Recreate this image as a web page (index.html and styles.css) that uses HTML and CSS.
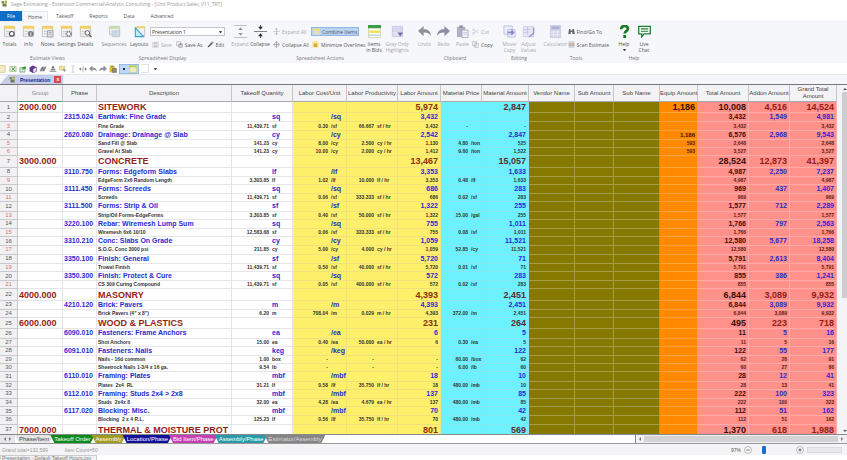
FILE: index.html
```html
<!DOCTYPE html>
<html lang="en">
<head>
<meta charset="utf-8">
<title>Sage Estimating</title>
<link rel="stylesheet" href="styles.css">
</head>
<body>
<svg class="defs" aria-hidden="true">
  <symbol id="sheet" viewBox="0 0 14 14"><path d="M1.5 1.5h11v11h-11z" fill="#f1f1f1" stroke="#c4c4c4"/><path d="M1 1h12v3H1z" fill="#f2cf63"/><path d="M3 7h5M3 9.500h4" stroke="#ccc"/></symbol>
  <symbol id="totals" viewBox="0 0 14 14"><use href="#sheet"/><circle cx="9.500" cy="9.500" r="2.500" fill="#fff" stroke="#555" stroke-width="1.300"/></symbol>
  <symbol id="info" viewBox="0 0 14 14"><use href="#sheet"/><circle cx="9.500" cy="9.500" r="3" fill="#777"/><path d="M9.500 8v3.500" stroke="#fff"/></symbol>
  <symbol id="notes" viewBox="0 0 14 14"><use href="#sheet"/><path d="M7 6h6v7H7z" fill="#ddd" stroke="#999" stroke-width=".8"/><path d="M8.500 8h3M8.500 10h3" stroke="#999" stroke-width=".7"/></symbol>
  <symbol id="settings" viewBox="0 0 14 14"><use href="#sheet"/><circle cx="9.500" cy="9.500" r="2.500" fill="#fff" stroke="#888" stroke-width="2" stroke-dasharray="1.500 .6"/></symbol>
  <symbol id="details" viewBox="0 0 14 14"><use href="#sheet"/><circle cx="9" cy="8.500" r="2.500" fill="#fff" stroke="#555"/><path d="M11 10.500l2.500 2.500" stroke="#555" stroke-width="1.300"/></symbol>
  <symbol id="seq" viewBox="0 0 14 14"><path d="M1.500 1.500h11v9h-11z" fill="#e8eee8" stroke="#bccbd0"/><path d="M1 1h12v3H1z" fill="#c8dcae"/><path d="M4.500 6.500h8v6h-8z" fill="#dfe7ef" stroke="#b8c4d0"/><path d="M5 8.500h7M5 10.500h7M8 7v5" stroke="#b8c4d0" stroke-width=".7"/></symbol>
  <symbol id="layouts" viewBox="0 0 14 14"><path d="M3.500 2.500h9v9h-9z" fill="#f1f1f1" stroke="#c4c4c4"/><path d="M3 1.500h10v2H3z" fill="#f2cf63"/><path d="M2.500 3v9.500h9z" fill="#c7e8f5" stroke="#3aa0cc" stroke-width="1.200"/></symbol>
  <symbol id="disk" viewBox="0 0 14 14"><path d="M1.500 2.500h11v10h-11z" fill="#e6e6e8" stroke="#bbb"/><path d="M4 3h6v3.500H4zM4 9h6v3H4z" fill="#c4c4c8"/></symbol>
  <symbol id="diskas" viewBox="0 0 14 14"><path d="M1.500 1.500h8v8h-8z" fill="#fff" stroke="#888"/><path d="M5.500 5.500h7v7h-7z" fill="#ddd" stroke="#777"/><path d="M7 6h4v2H7z" fill="#888"/></symbol>
  <symbol id="pencil" viewBox="0 0 14 14"><path d="M1 13l1-3 8-8 2 2-8 8z" fill="#555"/><path d="M10 1l3 3" stroke="#777" stroke-width="2"/></symbol>
  <symbol id="expand" viewBox="0 0 14 14"><path d="M0 .5h14M0 13.500h14" stroke="#bbb"/><path d="M7 2.500l2.500 3h-5zM7 11.500l2.500-3h-5z" fill="#999"/></symbol>
  <symbol id="collapse" viewBox="0 0 14 14"><path d="M0 7h14" stroke="#777"/><path d="M7 5L4.500 2h5zM7 9l-2.500 3h5z" fill="#222"/><path d="M7 0v3M7 11v3" stroke="#444"/></symbol>
  <symbol id="expall" viewBox="0 0 14 14"><path d="M0 7h14M7 1v12" stroke="#aaa"/><path d="M7 0l3 3.500H4zM7 14l3-3.500H4z" fill="#b0b0b0"/></symbol>
  <symbol id="colall" viewBox="0 0 14 14"><circle cx="7" cy="7" r="4.500" fill="none" stroke="#888"/><path d="M0 7h14M7 0v14" stroke="#777"/></symbol>
  <symbol id="combine" viewBox="0 0 14 14"><path d="M1 1h12v12H1z" fill="#f5ecb0"/><path d="M1 1h12v3.500H1z" fill="#e8d765"/><path d="M1 7.500h12M1 10.500h12" stroke="#a9c4e8"/></symbol>
  <symbol id="minover" viewBox="0 0 14 14"><path d="M1 1h12v12H1z" fill="#f4d87a"/><path d="M4 5h6v7H4z" fill="#d8a93c"/><path d="M1 3h12" stroke="#fff3c4"/></symbol>
  <symbol id="bids" viewBox="0 0 14 14"><path d="M.5.500h13v13H.5z" fill="#fbfbef" stroke="#cfd8b8"/><path d="M0 0h14v3.500H0z" fill="#3d9c46"/><path d="M1 6h12v2.500H1z" fill="#f2df58"/><path d="M1 11h12" stroke="#9cbfd8"/></symbol>
  <symbol id="gray" viewBox="0 0 14 14"><path d="M1.500 1.500h11v11h-11z" fill="#dfe1f2" stroke="#c6c9e2"/><path d="M2 4h10M2 6.500h10" stroke="#c9cbe4"/><path d="M7 8h6l-3 4.500z" fill="#6c6fa8"/></symbol>
  <symbol id="undo" viewBox="0 0 14 14"><path d="M0 6.500L6 1v3.500c5 0 7.500 2 8 7-2-2.500-4.500-3.500-8-3.300V12z" fill="#8f9298"/></symbol>
  <symbol id="redo" viewBox="0 0 14 14"><path d="M14 6.500L8 1v3.500c-5 0-7.500 2-8 7 2-2.500 4.500-3.500 8-3.300V12z" fill="#8b8fa6"/></symbol>
  <symbol id="paste" viewBox="0 0 14 14"><path d="M1 2h9v11H1z" fill="#aeb1c2"/><path d="M3.500.500h4v2.500h-4z" fill="#8d90a4"/><path d="M6.500 5.500h6.500v8H6.500z" fill="#f5f5fb" stroke="#a9acc6"/><path d="M8 8h4M8 10h4" stroke="#b5b8cf" stroke-width=".8"/></symbol>
  <symbol id="cut" viewBox="0 0 14 14"><path d="M4 4l9 6M4 10l9-6" stroke="#bbb"/><circle cx="3" cy="3.500" r="1.800" fill="none" stroke="#bbb"/><circle cx="3" cy="10.500" r="1.800" fill="none" stroke="#bbb"/></symbol>
  <symbol id="copy" viewBox="0 0 14 14"><path d="M1.500 1.500h7v8h-7zM5.500 4.500h7v8h-7z" fill="#fff" stroke="#888"/></symbol>
  <symbol id="move" viewBox="0 0 14 14"><path d="M1 1h9v9H1zM5 5h8v8H5z" fill="#eceefa" stroke="#bcc0e0"/><path d="M5 7h4V4.500L12.500 8 9 11.500V9H5z" fill="#8288c0"/></symbol>
  <symbol id="adjust" viewBox="0 0 14 14"><path d="M1.500 1.500h11v11h-11z" fill="#e6e7f5" stroke="#cdcfe8"/><path d="M2 5h7M2 8h5M6 2v8" stroke="#c3c5e0"/><path d="M12.500 3v6l-5 4" stroke="#9a9ec8" stroke-width="1.600" fill="none"/></symbol>
  <symbol id="calc" viewBox="0 0 14 14"><path d="M1 0h12v14H1z" fill="#cfd1e6"/><path d="M2.500 1.500h9v3h-9z" fill="#aeb1d2"/><path d="M2 7.500h10M2 10.500h10M5 6v7M9 6v7" stroke="#f0f0f8"/></symbol>
  <symbol id="find" viewBox="0 0 14 14"><path d="M2 2h3v3h4V2h3l1.500 10H8.500V8h-3v4H.5z" fill="#666"/></symbol>
  <symbol id="scan" viewBox="0 0 14 14"><path d="M1 2h12M1 6h12M1 9h12M1 12h12" stroke="#999" stroke-width="1.400"/><path d="M1 6h12" stroke="#b5855f" stroke-width="1.400"/></symbol>
  <symbol id="help" viewBox="0 0 14 14"><path d="M3.500 4.500C3.500 0 10.700 0 10.700 4c0 2.600-3.500 2.500-3.500 5.200" fill="none" stroke="#157a1d" stroke-width="2.800"/><path d="M5.700 10.800h3V14h-3z" fill="#157a1d"/></symbol>
  <symbol id="chat" viewBox="0 0 14 14"><path d="M.8 1.500h12.400v8H6.500L4 12.800V9.500H.8z" fill="#fff" stroke="#1e7d35" stroke-width="1.400"/><path d="M3 4.200h8M3 6.700h8" stroke="#1e7d35" stroke-width="1.200"/></symbol>
  <symbol id="logo" viewBox="0 0 14 14"><path d="M1 2h5v5H1z" fill="#789c48"/><path d="M7 1h5v5H7z" fill="#b8b04a"/><path d="M3 7h8v6H3z" fill="#6f7c50"/></symbol>
  <symbol id="q1" viewBox="0 0 14 14"><path d="M1 1h10v12H1z" fill="#f3ecc8" stroke="#c5b76c"/></symbol>
  <symbol id="q2" viewBox="0 0 14 14"><path d="M1.500 2.500h11v9h-11z" fill="#e6f0da" stroke="#86a96a"/><path d="M5 4l5 6M10 4l-5 6" stroke="#2f8f3a" stroke-width="1.600"/></symbol>
  <symbol id="q3" viewBox="0 0 14 14"><path d="M1.500 4.500h9v8h-9z" fill="#cfe5cf" stroke="#589a60"/><path d="M5 8c1-4 3-6 7-6v5z" fill="#3e9a4a"/></symbol>
  <symbol id="q4" viewBox="0 0 14 14"><path d="M7 1l6 3v7l-6 3-6-3V4z" fill="#63388c"/><path d="M7 7l6-3v7l-6 3z" fill="#f4effa" stroke="#63388c"/></symbol>
  <symbol id="q5" viewBox="0 0 14 14"><path d="M1 11l4-8h8l-4 8z" fill="#777"/><path d="M4 9h3M7 5h3" stroke="#fff"/></symbol>
  <symbol id="q6" viewBox="0 0 14 14"><path d="M1 10h12v2H1zM3 7h8v2H3z" fill="#888"/><path d="M7 1l3 5H4z" fill="#666"/></symbol>
  <symbol id="q7" viewBox="0 0 14 14"><path d="M1 2h9v7H1z" fill="#efe6a8" stroke="#c3b860"/><path d="M6 6l7 3-3 1v3z" fill="#888"/></symbol>
  <symbol id="q8" viewBox="0 0 14 14"><path d="M4 1.500h6M4 12.500h6M7 2v10" stroke="#aaa" fill="none"/></symbol>
  <symbol id="q9" viewBox="0 0 14 14"><path d="M1 7h12M7 1v12" stroke="#999"/><path d="M0 7l3.500-3v6zM14 7l-3.500-3v6z" fill="#888"/></symbol>
  <symbol id="q10" viewBox="0 0 14 14"><path d="M1 2h9v11H1z" fill="#e0b93e"/><path d="M3 1h5v2H3z" fill="#8a7a4a"/><path d="M6 6h7v7H6z" fill="#8f8a6a" stroke="#6e6a50"/></symbol>
  <symbol id="q11" viewBox="0 0 14 14"><path d="M1 1h12v12H1z" fill="#e3e9a4" stroke="#b8c46a"/><path d="M1 1h12v3H1z" fill="#c3cc58"/><path d="M1 7.500h12M1 10.500h12M5 4v9M9 4v9" stroke="#f6f8dc"/></symbol>
  <symbol id="min" viewBox="0 0 14 14"><circle cx="7" cy="7" r="6" fill="#fff" stroke="#888"/><path d="M4 7h6" stroke="#555" stroke-width="1.500"/></symbol>
  <symbol id="plus" viewBox="0 0 14 14"><circle cx="7" cy="7" r="6" fill="#fff" stroke="#888"/><path d="M4 7h6M7 4v6" stroke="#555" stroke-width="1.500"/></symbol>
</svg>

<header class="titlebar"><svg><use href="#logo"/></svg><span>Sage Estimating - Extension.Commercial\Analytic.Consulting - [Unit Product Sales_V11_TRT]</span></header>

<nav class="menu">
  <button class="file">File</button><button class="on">Home</button><button>Takeoff</button><button>Reports</button><button>Data</button><button>Advanced</button>
</nav>

<section class="ribbon">
  <div class="group views">
    <div class="tools">
      <button class="big"><svg><use href="#totals"/></svg>Totals</button>
      <button class="big"><svg><use href="#info"/></svg>Info</button>
      <button class="big"><svg><use href="#notes"/></svg>Notes</button>
      <button class="big"><svg><use href="#settings"/></svg>Settings</button>
      <button class="big"><svg><use href="#details"/></svg>Details</button>
    </div>
    <div class="caption">Estimate Views</div>
  </div>
  <div class="group display">
    <div class="tools">
      <button class="big seq"><svg><use href="#seq"/></svg>Sequences</button>
      <button class="big lay"><svg><use href="#layouts"/></svg>Layouts</button>
      <div class="stack wide">
        <label class="combo"><select aria-label="Layout"><option>Presentation 1</option></select><i></i></label>
        <div class="line">
          <button class="small off"><svg><use href="#disk"/></svg>Save</button>
          <button class="small"><svg><use href="#diskas"/></svg>Save As</button>
          <button class="small"><svg><use href="#pencil"/></svg>Edit</button>
        </div>
      </div>
    </div>
    <div class="caption">Spreadsheet Display</div>
  </div>
  <div class="group actions">
    <div class="tools">
      <button class="big off"><svg><use href="#expand"/></svg>Expand</button>
      <button class="big"><svg><use href="#collapse"/></svg>Collapse</button>
      <div class="stack all">
        <button class="small off"><svg><use href="#expall"/></svg>Expand All</button>
        <button class="small"><svg><use href="#colall"/></svg>Collapse All</button>
      </div>
      <div class="stack lines">
        <button class="small pressed"><svg><use href="#combine"/></svg>Combine Items</button>
        <button class="small"><svg><use href="#minover"/></svg>Minimize Overlines</button>
      </div>
      <button class="big"><svg><use href="#bids"/></svg>Items<br>in Bids</button>
      <button class="big off hl"><svg><use href="#gray"/></svg>Gray Only<br>Highlights</button>
    </div>
    <div class="caption">Spreadsheet Actions</div>
  </div>
  <div class="group clip">
    <div class="tools">
      <button class="big off"><svg><use href="#undo"/></svg>Undo</button>
      <button class="big off"><svg><use href="#redo"/></svg>Redo</button>
      <button class="big off"><svg><use href="#paste"/></svg>Paste</button>
      <div class="stack">
        <button class="small off"><svg><use href="#cut"/></svg>Cut</button>
        <button class="small"><svg><use href="#copy"/></svg>Copy</button>
      </div>
    </div>
    <div class="caption">Clipboard</div>
  </div>
  <div class="group edit">
    <div class="tools">
      <button class="big off"><svg><use href="#move"/></svg>Move/<br>Copy</button>
      <button class="big off"><svg><use href="#adjust"/></svg>Adjust<br>Values</button>
    </div>
    <div class="caption">Editing</div>
  </div>
  <div class="group find">
    <div class="tools">
      <button class="big off calc"><svg><use href="#calc"/></svg>Calculator</button>
      <div class="stack">
        <button class="small"><svg><use href="#find"/></svg>Find/Go To</button>
        <button class="small"><svg><use href="#scan"/></svg>Scan Estimate</button>
      </div>
    </div>
    <div class="caption">Tools</div>
  </div>
  <div class="group help">
    <div class="tools">
      <button class="big"><svg><use href="#help"/></svg>Help<i class="caret"></i></button>
      <button class="big"><svg><use href="#chat"/></svg>Live<br>Chat</button>
    </div>
    <div class="caption">Help</div>
  </div>
</section>

<div class="quick">
  <button aria-label="New"><svg><use href="#q1"/></svg></button>
  <button aria-label="Export"><svg><use href="#q2"/></svg></button>
  <button aria-label="Import"><svg><use href="#q3"/></svg></button>
  <button aria-label="Model"><svg><use href="#q4"/></svg></button>
  <button aria-label="Assembly"><svg><use href="#q5"/></svg></button>
  <button aria-label="Item"><svg><use href="#q6"/></svg></button>
  <button aria-label="Pick"><svg><use href="#q7"/></svg></button>
  <button aria-label="Text"><svg><use href="#q8"/></svg></button>
  <button aria-label="Move"><svg><use href="#q9"/></svg></button>
  <button aria-label="Undo"><svg><use href="#undo"/></svg></button>
  <button aria-label="Redo"><svg><use href="#redo"/></svg></button>
  <button aria-label="Paste"><svg><use href="#q10"/></svg></button>
  <span class="picked"><b></b><svg><use href="#q11"/></svg></span>
  <span class="blank"></span><i class="caret"></i>
</div>

<div class="docs"><div class="doc"><svg><use href="#logo"/></svg><span>Presentation</span><button aria-label="Close">x</button></div></div>

<main class="sheet">
  <div class="pane">
    <table>
      <colgroup>
        <col class="w18"><col class="w45"><col class="w34"><col class="w135"><col class="w61"><col class="w54"><col class="w51"><col class="w43"><col class="w41"><col class="w47"><col class="w46"><col class="w39"><col class="w46"><col class="w38"><col class="w51"><col class="w41"><col class="w47">
      </colgroup>
      <thead><tr><th></th><th class="dim">Group</th><th>Phase</th><th>Description</th><th>Takeoff Quantity</th><th>Labor Cost/Unit</th><th>Labor Productivity</th><th>Labor Amount</th><th>Material Price</th><th>Material Amount</th><th>Vendor Name</th><th>Sub Amount</th><th>Sub Name</th><th>Equip Amount</th><th>Total Amount</th><th>Addon Amount</th><th>Grand Total<br>Amount</th></tr></thead>
      <tbody id="rows"></tbody>
    </table>
  </div>
  <div class="vscroll"><i class="up"></i><div class="thumb"></div><i class="down"></i></div>
</main>

<div class="tabs">
  <span class="arrows"><i class="left"></i><i class="right"></i></span>
  <button class="t-white">Phase/Item</button><button class="t-green">Takeoff Order</button><button class="t-olive">Assembly</button><button class="t-navy">Location/Phase</button><button class="t-pink">Bid Item/Phase</button><button class="t-teal">Assembly/Phase</button><button class="t-gray">Estimator/Assembly</button>
  <div class="hscroll"><i class="left"></i><div class="bar"></div><i class="right"></i></div>
</div>

<footer class="status">
  <span>Grand total=132,599</span><span>Item Count=50</span>
  <span class="zoom"><span>97%</span><svg><use href="#min"/></svg><input type="range" aria-label="Zoom" min="0" max="100" value="20"><svg><use href="#plus"/></svg><b></b></span>
</footer>
<div class="taskbar"><div>Presentation - Default Takeoff Hours.csv</div></div>
<script src="rows.js"></script>
</body>
</html>
```

FILE: styles.css
```css
* { box-sizing: border-box; }
body {
  margin: 0;
  height: 100vh;
  display: flex;
  flex-direction: column;
  overflow: hidden;
  background: #fff;
  color: #555;
  font: 5px/6px "Open Sans", "Liberation Sans", sans-serif;
  white-space: nowrap;
}
button { border: 0; padding: 0; margin: 0; background: none; color: inherit; font: inherit; }
svg { display: block; flex: none; }
.defs { position: absolute; width: 0; height: 0; }

.titlebar { height: 11px; flex: none; display: flex; gap: 3px; color: #999; padding-left: 1px; line-height: 8px; }
.titlebar svg { width: 7px; height: 7px; }

.menu { height: 10px; flex: none; display: flex; }
.menu button { height: 10px; padding: 0 8px; }
.menu .file { width: 22px; padding: 0; background: #0f6fc6; color: #fff; }
.menu .on { background: #f7f8fa; width: 26px; padding: 0; border: 1px solid #e6e8ec; border-bottom: 0; }

.ribbon { height: 42px; flex: none; display: flex; gap: 5px; background: #f6f7fa; border-top: 1px solid #eceef1; }
.group { display: flex; flex-direction: column; justify-content: space-between; padding: 3px 0 2px; }
.caption { text-align: center; color: #777; }
.tools { display: flex; }
.big { display: flex; flex-direction: column; align-items: center; justify-content: flex-start; width: 20px; text-align: center; }
.big svg { width: 13px; height: 13px; margin-bottom: 3px; }
.off { color: #a8a8ae; }
.views .big { width: 19px; }
.display .seq { width: 28px; color: #888; }
.display .lay { width: 22px; }
.display { width: 125px; }
.actions { width: 180px; }
.clip { width: 80px; }
.clip .big { width: 19px; }
.edit .big { width: 19px; }
.find { width: 66px; }
.find .calc { width: 26px; }
.actions .hl { width: 26px; }
.stack { display: flex; flex-direction: column; gap: 4px; padding-top: 2px; align-items: flex-start; }
.small { height: 9px; display: flex; align-items: center; gap: 2px; }
.small svg { width: 7px; height: 7px; }
.wide { flex: 1; }
.all { width: 41px; padding-left: 3px; }
.lines { flex: 1; min-width: 0; }
.lines .small { padding: 0 1px; }
.lines .pressed { background: #b9d4f6; border: 1px solid #8fb6e6; }
.line { display: flex; gap: 4px; padding-left: 2px; }
.combo { width: 100%; height: 9px; display: flex; align-items: center; border: 1px solid #c4c6ca; background: #fff; padding-right: 2px; }
.combo select { appearance: none; flex: 1; border: 0; background: none; padding: 0 1px; font: inherit; color: #333; height: 7px; }
.combo i, .caret { border: 1px solid transparent; border-top: 2px solid #444; border-bottom: 0; width: 3px; }
.big .caret { margin-top: 2px; }

.quick { height: 11px; flex: none; display: flex; align-items: center; gap: 2px; margin-left: -1px; }
.quick svg { width: 8px; height: 8px; }
.quick .picked { display: flex; align-items: center; gap: 4px; padding: 0 1px 0 3px; height: 10px; background: #bdd7f6; border: 1px solid #95bbe8; }
.picked b { width: 2px; height: 2px; background: #223; }
.blank { width: 8px; height: 9px; background: #fff; border: 1px solid #e2e2e6; border-left: 0; margin-right: 3px; }

.docs { height: 11px; flex: none; background: #f5f6f9; border-top: 1px solid #e6e7eb; border-bottom: 1px solid #777; display: flex; }
.doc { display: flex; align-items: center; background: #c6cdea; padding: 0 2px 0 9px; gap: 4px; clip-path: polygon(8px 0, 100% 0, 100% 100%, 0 100%); color: #1e1e8c; font: bold 5px/6px "Liberation Sans", sans-serif; }
.doc svg { width: 7px; height: 7px; }
.doc button { width: 7px; height: 7px; line-height: 5px; background: #d94a4a; color: #fff; }

.sheet { flex: 1; min-height: 0; display: flex; background: #fff; font-family: "Liberation Sans", Arial, sans-serif; }
.pane { flex: 1; min-width: 0; overflow: hidden; }
table { width: 100%; height: calc(100% + 2px); table-layout: fixed; border-collapse: separate; border-spacing: 0; }
.w18 { width: 18px; } .w34 { width: 34px; } .w38 { width: 38px; } .w39 { width: 39px; }
.w41 { width: 41px; } .w43 { width: 43px; } .w45 { width: 45px; } .w46 { width: 46px; }
.w47 { width: 47px; } .w51 { width: 51px; } .w54 { width: 54px; } .w61 { width: 61px; } .w135 { width: 135px; }
th { height: 17px; padding: 0; background: #f3f3f5; border-right: 1px solid #c6c6ca; border-bottom: 1px solid #aaa; font-weight: normal; font-size: 6px; line-height: 7px; color: #444; }
th.dim { color: #888; border-bottom-color: #4f9a78; }
td { padding: 0 2px 0 1px; border-right: 1px solid #e4e6ec; border-bottom: 1px solid #e4e6ec; font-weight: bold; text-align: right; overflow: visible; }
tr.group-row td { height: 11px; font-size: 9px; line-height: 10px; color: #941d17; }
tr.phase td { height: 9px; font-size: 7px; line-height: 8px; color: #2a2ad2; }
tr.detail td { height: 8px; font-size: 5px; line-height: 7px; color: #333; }
tbody tr td.num { background: #f1f1f3; color: #666; font-size: 6px; line-height: 7px; font-weight: normal; text-align: center; padding: 0; border-color: #c9c9cd; }
tbody tr.detail td.num { font-size: 6px; }
tbody tr.group-row td.num, tbody tr.phase td.num { color: #555; font-size: 6px; }
tbody tr.detail td.num.red { color: #e07070; }
tbody td.text { text-align: left; white-space: pre; }
.pair { display: grid; grid-template-columns: 1fr 18px; column-gap: 3px; }
.pair span { text-align: left; }
.cost .pair { grid-template-columns: 1fr 13px; }
.price .pair { grid-template-columns: 1fr 8px; }
td.labor { background: #fff06c; border-color: #f0e27a; }
td.mat { background: #6cf2ff; border-color: #88e4f2; }
td.sub { background: #857900; border-color: #a59c45; }
td.equip { background: #ff8a00; border-color: #ffa33a; }
td.sum { background: #ff908a; border-color: #ffaca8; }
tr.group-row td.labor { color: #8a3208; }
tr.group-row td.mat { color: #5c2c30; }
tr.group-row td.equip, tr.group-row td.total { color: #3a0f08; }
tr.phase td.equip, tr.phase td.total { color: #3a0f10; }
tr.detail td.sum, tr.detail td.equip { color: #5a1c18; }
tr.phase td.equip { font-size: 6px; }
.vscroll { width: 10px; flex: none; display: flex; flex-direction: column; align-items: flex-end; padding: 3px 0 2px; background: #f4f4f7; }
.thumb { width: 5px; height: 60%; background: #cdcdd0; margin-top: 2px; }
.up, .down, .left, .right { width: 0; height: 0; border: 2px solid transparent; flex: none; }
.up { border-top: 0; border-bottom-color: #555; }
.down { border-bottom: 0; border-top-color: #555; margin-top: auto; }
.left { border-left: 0; border-right-color: #777; }
.right { border-right: 0; border-left-color: #777; }

.tabs { height: 9px; flex: none; display: flex; background: #fff; border-top: 1px solid #888; font: 6px/8px "Liberation Sans", Arial, sans-serif; }
.tabs .arrows { width: 15px; display: flex; align-items: center; justify-content: space-evenly; background: #e6e6e8; }
.tabs button { color: #fff; padding: 0 4px; margin-right: -3px; clip-path: polygon(0 0, 100% 0, calc(100% - 4px) 100%, 4px 100%); }
.tabs .t-white { background: #e4e4e4; color: #444; }
.tabs .t-green { background: #0d8a1e; }
.tabs .t-olive { background: #a39a20; }
.tabs .t-navy { background: #10109a; }
.tabs .t-pink { background: #c63fb4; }
.tabs .t-teal { background: #2a9aa8; }
.tabs .t-gray { background: #858585; color: #ddd; }
.hscroll { width: 25%; margin-left: auto; display: flex; align-items: center; gap: 3px; padding: 0 4px 0 3px; background: #f1f1f3; border-left: 1px solid #888; }
.bar { flex: 1; height: 6px; background: #d3d3d6; }

.status { height: 12px; flex: none; display: flex; align-items: center; gap: 17px; padding: 0 5px 0 2px; background: #f4f4f6; border-top: 1px solid #999; color: #999; font-family: "Liberation Sans", Arial, sans-serif; }
.zoom { margin-left: auto; display: flex; align-items: center; gap: 3px; color: #555; }
.zoom svg { width: 8px; height: 8px; }
.zoom input { appearance: none; width: 38px; height: 8px; margin: 0; background: none; }
.zoom input::-webkit-slider-thumb { appearance: none; width: 4px; height: 8px; border-radius: 1px; background: #1a6fd0; }
.zoom b { width: 35px; height: 6px; background: #e9e9ec; border: 1px solid #dcdce0; }
.taskbar { height: 5px; flex: none; overflow: hidden; color: #777; font-family: "Liberation Sans", Arial, sans-serif; }
.taskbar div { width: 97px; background: #f2f2f4; border: 1px solid #ccc; padding-left: 1px; line-height: 5px; }
```

FILE: rows.js
```js
// Fields: kind | code | description | quantity | unit | labor cost | unit | productivity | unit
//         | labor amount | material price | unit | material amount | equipment | total | addon | grand total
const data = `
g|2000.000|SITEWORK|||||||5,974|||2,847|1,186|10,008|4,516|14,524
p|2315.024|Earthwk: Fine Grade||sq||/sq|||3,432|||||3,432|1,549|4,981
d||Fine Grade|11,439.71|sf|0.30|/sf|66.667|sf / hr|3,432|-||-||3,432||3,432
p|2620.080|Drainage: Drainage @ Slab||cy||/cy|||2,542|||2,847|1,186|6,576|2,968|9,543
d||Sand Fill @ Slab|141.23|cy|8.00|/cy|2.500|cy / hr|1,130|4.80|/ton|525|593|2,648||2,648
d||Gravel At Slab|141.23|cy|10.00|/cy|2.000|cy / hr|1,412|9.60|/ton|1,522|593|3,527||3,527
g|3000.000|CONCRETE|||||||13,467|||15,057||28,524|12,873|41,397
p|3110.750|Forms: Edgeform Slabs||lf||/lf|||3,353|||1,633||4,987|2,250|7,237
d||EdgeForm 2x6 Random Length|3,303.85|lf|1.02|/lf|10.000|lf / hr|3,353|0.48|/lf|1,633||4,987||4,987
p|3111.450|Forms: Screeds||sq||/sq|||686|||283||969|437|1,407
d||Screeds|11,439.71|sf|0.06|/sf|333.333|sf / hr|686|0.02|/sf|283||969||969
p|3111.500|Forms: Strip & Oil||sf||/sf|||1,322|||255||1,577|712|2,289
d||Strip/Oil Forms-EdgeForms|3,303.85|sf|0.40|/sf|50.000|sf / hr|1,322|15.00|/gal|255||1,577||1,577
p|3220.100|Rebar: Wiremesh Lump Sum||sq||/sq|||755|||1,011||1,766|797|2,563
d||Wiremesh 6x6 10/10|12,583.68|sf|0.06|/sf|333.333|sf / hr|755|0.08|/sf|1,011||1,766||1,766
p|3310.210|Conc: Slabs On Grade||cy||/cy|||1,059|||11,521||12,580|5,677|18,258
d||S.O.G. Conc 3000 psi|211.85|cy|5.00|/cy|4.000|cy / hr|1,059|52.85|/cy|11,521||12,580||12,580
p|3350.100|Finish: General||sf||/sf|||5,720|||71||5,791|2,613|8,404
d||Trowel Finish|11,439.71|sf|0.50|/sf|40.000|sf / hr|5,720|0.01|/sf|71||5,791||5,791
p|3350.300|Finish: Protect & Cure||sq||/sq|||572|||283||855|386|1,241
d||CS 309 Curing Compound|11,439.71|sf|0.05|/sf|400.000|sf / hr|572|0.02|/sf|283||855||855
g|4000.000|MASONRY|||||||4,393|||2,451||6,844|3,089|9,932
p|4210.120|Brick: Pavers||m||/m|||4,393|||2,451||6,844|3,089|9,932
d||Brick Pavers (4" x 8")|6.20|m|708.04|/m|0.029|m / hr|4,393|372.00|/m|2,451||6,844|3,089|9,932
g|6000.000|WOOD & PLASTICS|||||||231|||264||495|223|718
p|6090.010|Fasteners: Frame Anchors||ea||/ea|||6|||5||11|5|16
d||Shot Anchors|15.00|ea|0.40|/ea|50.000|ea / hr|6|0.30|/ea|5||11|5|16
p|6091.010|Fasteners: Nails||keg||/keg||||||122||122|55|177
d||Nails - 16d common|1.00|box|-||-||-|60.00|/box|62||62|28|91
d||Sheetrock Nails 1-3/4 x 16 ga.|9.54|lb|-||-||-|6.00|/lb|60||60|27|86
p|6110.010|Framing: Plates||mbf||/mbf|||18|||10||28|12|41
d||Plates  2x4  RL|31.21|lf|0.58|/lf|35.750|lf / hr|18|480.00|/mb|10||28|13|41
p|6112.010|Framing: Studs 2x4 > 2x8||mbf||/mbf|||137|||85||222|100|323
d||Studs  2x4x 8|32.00|ea|4.28|/ea|4.679|ea / hr|137|480.00|/mb|85||222|100|323
p|6117.020|Blocking: Misc.||mbf||/mbf|||70|||42||112|51|162
d||Blocking  2 x 4 R.L.|125.23|lf|0.56|/lf|35.750|lf / hr|70|480.00|/mb|42||112|51|162
g|7000.000|THERMAL & MOISTURE PROT|||||||801|||569||1,370|618|1,988`;

const kinds = { g: "group-row", p: "phase", d: "detail" };
const esc = s => s.replace(/&/g, "&amp;").replace(/>/g, "&gt;");
const cell = (cls, text) => `<td class="${cls}">${esc(text)}</td>`;
const pair = (cls, value, unit) =>
  `<td class="${cls}">` + (value || unit ? `<div class="pair">${esc(value)}${value ? "" : "<b></b>"}<span>${esc(unit)}</span></div>` : "") + "</td>";

document.getElementById("rows").innerHTML = data.trim().split("\n").map((line, i) => {
  const f = line.split("|");
  return `<tr class="${kinds[f[0]]}">` +
    cell(i < 21 ? "num red" : "num", String(i + 1)) +
    cell("text", f[0] === "g" ? f[1] : "") +
    cell("text", f[0] === "p" ? f[1] : "") +
    cell("text", f[2]) +
    pair("qty", f[3], f[4]) +
    pair("labor cost", f[5], f[6]) +
    pair("labor prod", f[7], f[8]) +
    cell("labor", f[9]) +
    pair("mat price", f[10], f[11]) +
    cell("mat", f[12]) +
    cell("sub", "") + cell("sub", "") + cell("sub", "") +
    cell("equip", f[13]) +
    cell("sum total", f[14]) + cell("sum", f[15]) + cell("sum", f[16]) +
    "</tr>";
}).join("");
```
